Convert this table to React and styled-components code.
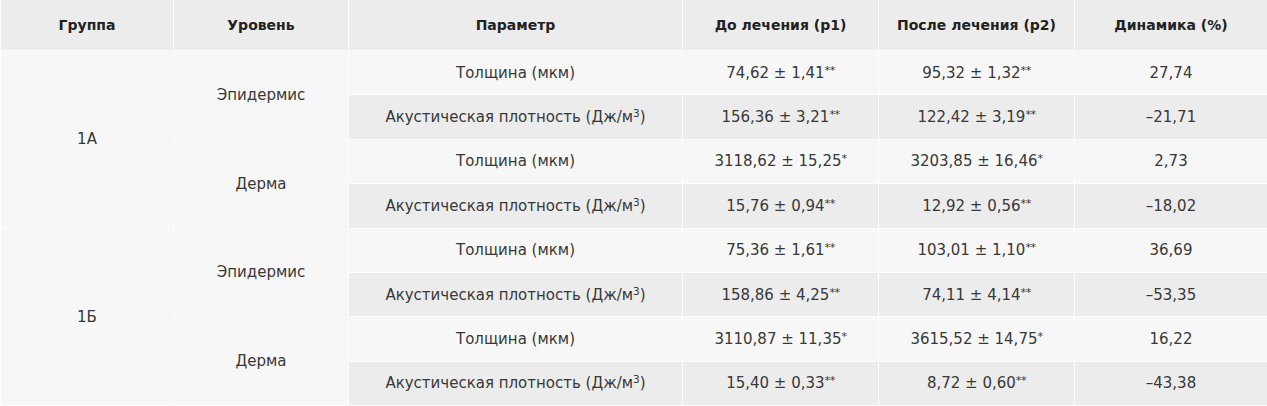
import styled, { createGlobalStyle } from "styled-components";

const GlobalStyle = createGlobalStyle`
  html, body {
    margin: 0;
    padding: 0;
    background: #ffffff;
  }
  body {
    font-family: "DejaVu Sans", "Liberation Sans", sans-serif;
  }
`;

const Table = styled.table`
  width: 1267px;
  height: 406px;
  border-collapse: collapse;
  table-layout: fixed;
  font-size: 15px;
  color: #383838;
`;

const HeadCell = styled.th`
  height: 50px;
  background: #ececec;
  border: 1px solid #ffffff;
  border-top: none;
  font-weight: 700;
  font-size: 14px;
  color: #222222;
  text-align: center;
  vertical-align: middle;
  padding: 0 8px;
`;

const Cell = styled.td`
  background: ${(p) => (p.$shade ? "#ececec" : "#f7f7f7")};
  border: 1px solid #ffffff;
  text-align: center;
  vertical-align: middle;
  padding: 0 8px;
  white-space: nowrap;
`;

const Sup = styled.sup`
  font-size: 0.7em;
  vertical-align: 0.45em;
  line-height: 0;
`;

const Star = styled.span`
  font-size: 0.75em;
  vertical-align: 0.35em;
  letter-spacing: -0.5px;
`;

const columns = [
  { title: "Группа", width: 173 },
  { title: "Уровень", width: 175 },
  { title: "Параметр", width: 334 },
  { title: "До лечения (p1)", width: 196 },
  { title: "После лечения (p2)", width: 196 },
  { title: "Динамика (%)", width: 193 },
];

const data = [
  {
    group: "1А",
    levels: [
      {
        name: "Эпидермис",
        rows: [
          ["Толщина (мкм)", "74,62 ± 1,41", "**", "95,32 ± 1,32", "**", "27,74"],
          ["density", "156,36 ± 3,21", "**", "122,42 ± 3,19", "**", "–21,71"],
        ],
      },
      {
        name: "Дерма",
        rows: [
          ["Толщина (мкм)", "3118,62 ± 15,25", "*", "3203,85 ± 16,46", "*", "2,73"],
          ["density", "15,76 ± 0,94", "**", "12,92 ± 0,56", "**", "–18,02"],
        ],
      },
    ],
  },
  {
    group: "1Б",
    levels: [
      {
        name: "Эпидермис",
        rows: [
          ["Толщина (мкм)", "75,36 ± 1,61", "**", "103,01 ± 1,10", "**", "36,69"],
          ["density", "158,86 ± 4,25", "**", "74,11 ± 4,14", "**", "–53,35"],
        ],
      },
      {
        name: "Дерма",
        rows: [
          ["Толщина (мкм)", "3110,87 ± 11,35", "*", "3615,52 ± 14,75", "*", "16,22"],
          ["density", "15,40 ± 0,33", "**", "8,72 ± 0,60", "**", "–43,38"],
        ],
      },
    ],
  },
];

function ParamLabel({ value }) {
  if (value === "density") {
    return (
      <>
        Акустическая плотность (Дж/м<Sup>3</Sup>)
      </>
    );
  }
  return value;
}

export default function App() {
  return (
    <>
      <GlobalStyle />
      <Table>
        <colgroup>
          {columns.map((c) => (
            <col key={c.title} style={{ width: c.width }} />
          ))}
        </colgroup>
        <thead>
          <tr>
            {columns.map((c) => (
              <HeadCell key={c.title}>{c.title}</HeadCell>
            ))}
          </tr>
        </thead>
        <tbody>
          {data.map((g) =>
            g.levels.map((lvl, li) =>
              lvl.rows.map((r, ri) => {
                const shade = ri === 1;
                return (
                  <tr key={g.group + lvl.name + ri}>
                    {li === 0 && ri === 0 && <Cell rowSpan={4}>{g.group}</Cell>}
                    {ri === 0 && <Cell rowSpan={2}>{lvl.name}</Cell>}
                    <Cell $shade={shade}>
                      <ParamLabel value={r[0]} />
                    </Cell>
                    <Cell $shade={shade}>
                      {r[1]}
                      <Star>{r[2]}</Star>
                    </Cell>
                    <Cell $shade={shade}>
                      {r[3]}
                      <Star>{r[4]}</Star>
                    </Cell>
                    <Cell $shade={shade}>{r[5]}</Cell>
                  </tr>
                );
              })
            )
          )}
        </tbody>
      </Table>
    </>
  );
}
